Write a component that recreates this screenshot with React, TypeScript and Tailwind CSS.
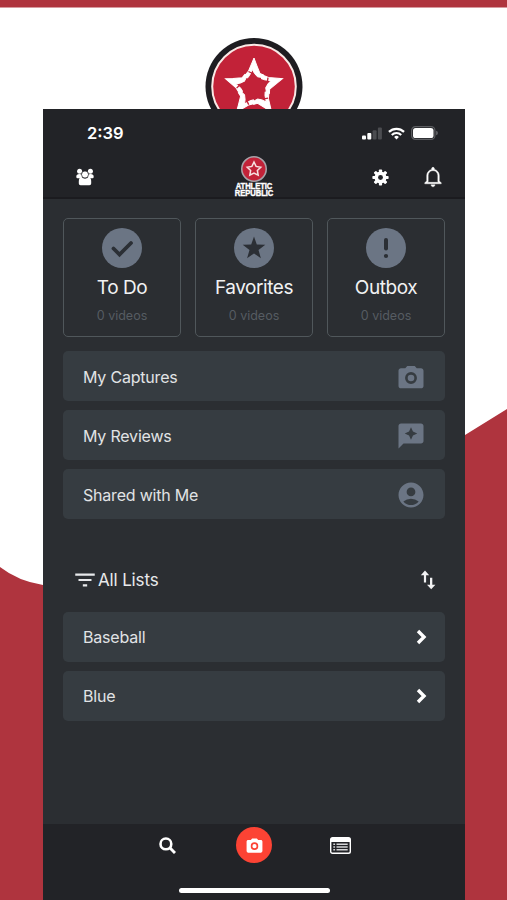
import type { ReactNode } from "react";
import { IoMdNotificationsOutline } from "react-icons/io";
import { MdAccountCircle, MdFilterList, MdReviews } from "react-icons/md";

const CheckIcon = () => (
  <svg viewBox="0 0 40 40" className="size-10">
    <circle cx="20" cy="20" r="20" fill="#6b7584" />
    <path d="M11.5 20.5l6 6L29 15" fill="none" stroke="#2b2f35" strokeWidth="3.8" strokeLinecap="round" />
  </svg>
);

const StarIcon = () => (
  <svg viewBox="0 0 40 40" className="size-10">
    <circle cx="20" cy="20" r="20" fill="#6b7584" />
    <path d="M20 8.5l2.8 8.1 8.5.2-6.8 5.2 2.4 8.2-6.9-4.8-6.9 4.8 2.4-8.2-6.8-5.2 8.5-.2z" fill="#2b2f35" />
  </svg>
);

const AlertIcon = () => (
  <svg viewBox="0 0 40 40" className="size-10">
    <circle cx="20" cy="20" r="20" fill="#6b7584" />
    <rect x="18" y="10" width="4" height="12.5" rx="2" fill="#2b2f35" />
    <circle cx="20" cy="28" r="2.1" fill="#2b2f35" />
  </svg>
);

const CameraIcon = ({ size, lens }: { size: number; lens: string }) => (
  <svg viewBox="0 0 24 24" width={size} height={size} fill="currentColor">
    <path d="M9 3.200L7.400 5H4c-1.100 0-2 .8-2 1.900v12.200c0 1.100.9 1.900 2 1.900h16c1.100 0 2-.8 2-1.900V6.900C22 5.800 21.100 5 20 5h-3.400L15 3.200z" />
    <circle cx="12" cy="12.800" r="3.700" fill="none" stroke={lens} strokeWidth="2.100" />
  </svg>
);

const ChevronIcon = () => (
  <svg viewBox="0 0 12 16" className="h-4 w-3">
    <path d="M3 2l6 6-6 6" fill="none" stroke="#fff" strokeWidth="3.4" />
  </svg>
);

const SwapIcon = () => (
  <svg viewBox="0 0 16 20" className="h-5 w-4" fill="#f1f2f3">
    <path d="M3.900 12.500V5.200H.8L5 .6l4.200 4.600H6.100v7.300zM10 7.800h2.300v6.900h3.100l-4.200 4.500L7 14.700h3z" />
  </svg>
);

const GearIcon = () => (
  <svg viewBox="0 0 18 18" className="size-[17px]">
    {[0, 45, 90, 135].map((deg) => (
      <rect key={deg} x="7.300" y=".4" width="3.400" height="17.200" rx=".8" fill="#fff" transform={`rotate(${deg} 9 9)`} />
    ))}
    <circle cx="9" cy="9" r="6.300" fill="#fff" />
    <circle cx="9" cy="9" r="2.600" fill="#222327" />
  </svg>
);

const PeopleIcon = () => (
  <svg viewBox="0 0 18 18" className="size-[18px]" fill="#fff">
    <circle cx="3.600" cy="3.200" r="2.500" />
    <circle cx="14.400" cy="3.200" r="2.500" />
    <path d="M.3 8.800C.3 6.900 1.400 6 3.400 6c2 0 3 1 3.200 2.500L5.500 10.300H1.500Q.3 10.300.3 8.800zM17.700 8.800C17.700 6.900 16.600 6 14.600 6c-2 0-3 1-3.200 2.500l1.100 1.800h4q1.200 0 1.200-1.500z" />
    <path d="M2.800 13.200c0-2.600 1-4 3-4 1 1 2 1.300 3.200 1.300s2.200-.3 3.200-1.300c2 0 3 1.400 3 4v2.200q0 1.800-1.800 1.800H4.600q-1.800 0-1.800-1.800z" />
    <circle cx="9" cy="6.500" r="3.500" stroke="#222327" strokeWidth=".7" />
  </svg>
);

const SearchIcon = () => (
  <svg viewBox="0 0 17 17" className="size-[17px]" fill="none" stroke="#fff">
    <circle cx="6.900" cy="6.900" r="5.400" strokeWidth="2.600" />
    <path d="M10.800 10.800l5.200 5.200" strokeWidth="2.900" />
  </svg>
);

const ListIcon = () => (
  <svg viewBox="0 0 21 17" className="h-[17px] w-[21px]">
    <rect x=".7" y=".7" width="19.600" height="15.600" rx="1.800" fill="none" stroke="#fff" strokeWidth="1.400" />
    <path d="M1 1h19v4H1z" fill="#fff" />
    <path d="M3.300 7.200h1.800M3.300 10h1.800M3.300 12.800h1.800M6.500 7.200h11.200M6.500 10h11.200M6.500 12.800h11.200" stroke="#d5d6d8" strokeWidth="1.500" />
  </svg>
);

// five arms round an open middle, each cut by one slit
const StarMark = () => (
  <>
    {[0, 72, 144, 216, 288].map((deg) => (
      <g key={deg} transform={`rotate(${deg} 50 50)`}>
        <path
          d="M50 20L52.600 27 56 35.500 59.800 37 58 39.500 53.500 38.800 50.500 35.500 48.300 31.500 45.500 37.500 43.500 40 39.800 38.500 44.500 33z"
          fill="#fff"
          stroke="#fff"
          strokeWidth="1"
        />
        <path d="M44.500 33.500l4 2" stroke="#c22238" strokeWidth="1.300" />
      </g>
    ))}
  </>
);

const tiles: { label: string; icon: ReactNode }[] = [
  { label: "To Do", icon: <CheckIcon /> },
  { label: "Favorites", icon: <StarIcon /> },
  { label: "Outbox", icon: <AlertIcon /> },
];

const links: { label: string; icon: ReactNode }[] = [
  { label: "My Captures", icon: <CameraIcon size={30} lens="#363c41" /> },
  { label: "My Reviews", icon: <MdReviews size={30} /> },
  { label: "Shared with Me", icon: <MdAccountCircle size={30} /> },
];

const lists = ["Baseball", "Blue"];

const StatusBar = () => (
  <div className="flex h-12 items-center justify-between pl-11 pr-[27px]">
    <span className="text-[16.5px] font-semibold text-white">2:39</span>
    <div className="flex items-center gap-[6px]">
      <svg viewBox="0 0 20 13" className="h-[13px] w-5">
        <rect x="0" y="8.500" width="4" height="4" rx="1" fill="#fff" />
        <rect x="5.300" y="6" width="4" height="6.500" rx="1" fill="#fff" />
        <rect x="10.600" y="3.300" width="4" height="9.200" rx="1" fill="#4b4c50" />
        <rect x="15.900" y="0.500" width="4" height="12" rx="1" fill="#4b4c50" />
      </svg>
      <svg viewBox="0 0 18 13" className="h-[13px] w-[17px]" fill="none" stroke="#fff" strokeWidth="2.300">
        <path d="M1 4.800a11.500 11.500 0 0 1 16 0M4 8a7.200 7.200 0 0 1 10 0" />
        <path d="M9 12.800L6.500 10.200a3.600 3.600 0 0 1 5 0z" fill="#fff" stroke="none" />
      </svg>
      <svg viewBox="0 0 27 14" className="h-[14px] w-[27px]">
        <rect x=".6" y=".6" width="23.300" height="12.800" rx="3.800" fill="none" stroke="#5c5d61" strokeWidth="1.200" />
        <rect x="2" y="2" width="20.500" height="10" rx="2.600" fill="#fff" />
        <path d="M25 4.700q2 .6 2 2.300t-2 2.300z" fill="#5c5d61" />
      </svg>
    </div>
  </div>
);

const Header = () => (
  <header className="h-[90px] border-b-2 border-[#1b1b1f] bg-[#222327]">
    <StatusBar />
    <div className="grid h-10 grid-cols-3 pl-[33px] pr-[22px]">
      <div className="flex items-center">
        <PeopleIcon />
      </div>
      <div className="flex flex-col items-center pr-[11px]">
        <svg viewBox="0 0 100 100" className="-mt-px size-[26px] shrink-0">
          <circle cx="50" cy="50" r="47" fill="#c22238" stroke="#a8a2a8" strokeWidth="6" />
          <path d="M50 23l8 17 18 3-13 13 3 18-16-8-16 8 3-18-13-13 18-3z" fill="none" stroke="#f6dfe0" strokeWidth="6" />
        </svg>
        <p className="mt-px w-[46px] scale-x-[0.9] text-center font-['Liberation_Sans',sans-serif] text-[8.5px] leading-[6.8px] font-bold tracking-[-0.1px] text-white [-webkit-text-stroke:0.4px_white]">
          ATHLETIC REPUBLIC
        </p>
      </div>
      <div className="flex items-center justify-end gap-[32px] text-white">
        <GearIcon />
        <IoMdNotificationsOutline size={24} className="-mr-[2px] stroke-white stroke-[8px]" />
      </div>
    </div>
  </header>
);

const App = () => {
  return (
    <div className="relative h-[900px] w-[507px] overflow-hidden bg-white font-[Inter,sans-serif]">
      {/* Backdrop */}
      <svg viewBox="0 0 507 900" className="absolute inset-0 h-full w-full">
        <path d="M0 0h507v7.500H0zM0 567Q18 581 43 585Q240 590 465 435L507 409V900H0z" fill="#af343e" />
        <circle cx="254" cy="86.500" r="48.500" fill="#1e1d21" />
        <circle cx="254" cy="86.500" r="41.800" fill="#c22238" stroke="#fae9e6" strokeWidth="2" />
        <g transform="translate(204 38)">
          <StarMark />
        </g>
      </svg>

      {/* Phone */}
      <div className="relative mt-[109px] ml-[43px] flex h-[791px] w-[422px] flex-col bg-[#2b2e32]">
        <Header />

        <main className="flex-1 px-5 pt-[19px]">
          <div className="grid grid-cols-3 gap-[14px]">
            {tiles.map((tile) => (
              <div
                key={tile.label}
                className="flex h-[119px] flex-col items-center rounded-[5px] border border-[#50575b] pt-[9px]"
              >
                {tile.icon}
                <span className="mt-[6px] text-[19px] leading-7 tracking-[-0.45px] text-[#f1f2f3]">{tile.label}</span>
                <span className="mt-1 text-[12.5px] leading-5 text-[#565c62]">0 videos</span>
              </div>
            ))}
          </div>

          <div className="mt-[14px] flex flex-col gap-[9px]">
            {links.map((link) => (
              <div
                key={link.label}
                className="flex h-[50px] items-center justify-between rounded-[5px] bg-[#363c41] pt-px pr-[19px] pl-5 text-[#6b7584]"
              >
                <span className="text-[16px] tracking-[-0.2px] text-[#e1e3e5]">{link.label}</span>
                {link.icon}
              </div>
            ))}
          </div>

          <div className="mt-[46px] flex h-[30px] items-center justify-between pr-[9px] pl-[9px] text-[#e8e9eb]">
            <div className="flex items-center">
              <MdFilterList size={26} />
              <span className="pt-[2px] text-[17px] tracking-[-0.15px]">All Lists</span>
            </div>
            <SwapIcon />
          </div>

          <div className="mt-[17px] flex flex-col gap-[9px]">
            {lists.map((name) => (
              <div
                key={name}
                className="flex h-[50px] items-center justify-between rounded-[5px] bg-[#363c41] pr-[18px] pl-5"
              >
                <span className="text-[16px] tracking-[-0.2px] text-[#e1e3e5]">{name}</span>
                <ChevronIcon />
              </div>
            ))}
          </div>
        </main>

        {/* Bottom bar */}
        <nav className="flex h-[76px] flex-col items-center bg-[#222327] pt-[3px]">
          <div className="ml-[2px] flex w-[192px] items-center justify-between">
            <SearchIcon />
            <div className="ml-[2px] flex size-9 items-center justify-center rounded-full bg-[#fc4334] text-white">
              <CameraIcon size={19} lens="#fc4334" />
            </div>
            <ListIcon />
          </div>
          <div className="mt-[24.5px] h-[5px] w-[151px] rounded-full bg-white" />
        </nav>
      </div>
    </div>
  );
};

export default App;
